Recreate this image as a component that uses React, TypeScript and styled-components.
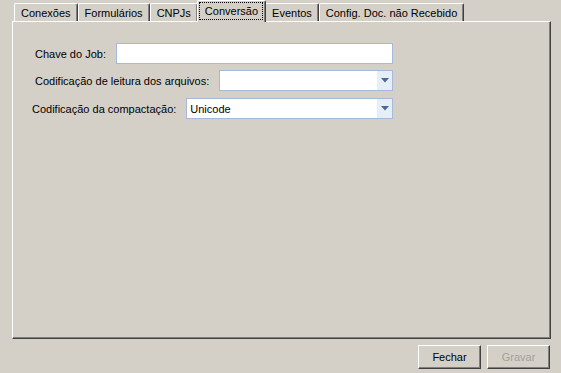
import React from 'react';
import styled, {createGlobalStyle} from 'styled-components';

const FACE = '#d4d0c8';
const SHADOW = '#808080';
const DARK = '#404040';
const FIELD_BORDER = '#a5b9da';

const GlobalStyle = createGlobalStyle`
	html, body {
		margin: 0;
		background: ${FACE};
	}
	body {
		font-family: "Liberation Sans", Arial, sans-serif;
		font-size: 11px;
		color: #000;
	}
`;

const Frame = styled.div`
	width: 561px;
	height: 373px;
	box-sizing: border-box;
	padding: 0 10px 0 12px;
	display: flex;
	flex-direction: column;
	background: ${FACE};
`;

const TabStrip = styled.div`
	display: flex;
	align-items: flex-end;
	height: 21px;
	padding-left: 2px;
	position: relative;
	z-index: 1;
`;

const Tab = styled.div<{$active?: boolean}>`
	position: relative;
	box-sizing: border-box;
	height: ${(p) => (p.$active ? '22px' : '18px')};
	margin: ${(p) => (p.$active ? '0 -1px -1px -1px' : '0')};
	padding: ${(p) => (p.$active ? '0 7px 2px' : '0 6px')};
	display: flex;
	align-items: center;
	white-space: nowrap;
	background: ${FACE};
	border-top: 1px solid #fff;
	border-left: 1px solid #fff;
	border-right: 1px solid ${DARK};
	border-radius: 2px 2px 0 0;
	box-shadow: inset -1px 0 0 ${SHADOW};
	cursor: default;

	${(p) =>
		p.$active &&
		`
		z-index: 1;
		&::after {
			content: '';
			position: absolute;
			left: 1px;
			right: 2px;
			top: 1px;
			bottom: 2px;
			border: 1px dotted #000;
		}
	`}
`;

const Panel = styled.div`
	height: 318px;
	box-sizing: border-box;
	border-top: 1px solid #fff;
	border-left: 1px solid #fff;
	border-right: 1px solid ${DARK};
	border-bottom: 1px solid ${DARK};
	box-shadow: inset -1px -1px 0 ${SHADOW};
	padding-top: 21px;
`;

const Form = styled.div`
	width: 380px;
	display: flex;
	flex-direction: column;
	gap: 6px;
`;

const Row = styled.div<{$indent: number; $top?: number}>`
	display: flex;
	align-items: center;
	gap: 10px;
	padding-left: ${(p) => p.$indent}px;
	margin-top: ${(p) => p.$top ?? 0}px;
`;

const Label = styled.label`
	white-space: nowrap;
	flex: none;
`;

const TextInput = styled.input`
	flex: 1;
	min-width: 0;
	height: 21px;
	box-sizing: border-box;
	border: 1px solid ${FIELD_BORDER};
	background: #fff;
	padding: 0 3px;
	font: inherit;
	outline: none;
`;

const Combo = styled.div`
	flex: 1;
	min-width: 0;
	height: 21px;
	box-sizing: border-box;
	border: 1px solid ${FIELD_BORDER};
	background: #fff;
	display: flex;
	align-items: stretch;
`;

const ComboText = styled.span`
	flex: 1;
	display: flex;
	align-items: center;
	padding-left: 3px;
`;

const ComboButton = styled.span`
	width: 15px;
	flex: none;
	background: #e6eef9;
	display: flex;
	align-items: center;
	justify-content: center;
`;

const Footer = styled.div`
	display: flex;
	justify-content: flex-end;
	gap: 6px;
	margin-top: 6px;
	padding-right: 1px;
`;

const Button = styled.button`
	width: 63px;
	height: 24px;
	box-sizing: border-box;
	background: ${FACE};
	border-top: 1px solid #fff;
	border-left: 1px solid #fff;
	border-right: 1px solid ${DARK};
	border-bottom: 1px solid ${DARK};
	box-shadow: inset -1px -1px 0 ${SHADOW};
	font: inherit;
	color: #000;
	padding: 0;

	&:disabled {
		color: #a3a09a;
	}
`;

const ArrowDown: React.FC = () => (
	<svg width="8" height="5" viewBox="0 0 8 5">
		<path d="M0 0h8L4 4.5z" fill="#4d6893" />
	</svg>
);

const ComboBox: React.FC<{value?: string}> = ({value}) => (
	<Combo>
		<ComboText>{value}</ComboText>
		<ComboButton>
			<ArrowDown />
		</ComboButton>
	</Combo>
);

const tabs = ['Conexões', 'Formulários', 'CNPJs', 'Conversão', 'Eventos', 'Config. Doc. não Recebido'];

export default function App() {
	return (
		<>
			<GlobalStyle />
			<Frame>
				<TabStrip>
					{tabs.map((t) => (
						<Tab key={t} $active={t === 'Conversão'}>
							{t}
						</Tab>
					))}
				</TabStrip>
				<Panel>
					<Form>
						<Row $indent={22}>
							<Label>Chave do Job:</Label>
							<TextInput />
						</Row>
						<Row $indent={22}>
							<Label>Codificação de leitura dos arquivos:</Label>
							<ComboBox />
						</Row>
						<Row $indent={19} $top={1}>
							<Label>Codificação da compactação:</Label>
							<ComboBox value="Unicode" />
						</Row>
					</Form>
				</Panel>
				<Footer>
					<Button>Fechar</Button>
					<Button disabled>Gravar</Button>
				</Footer>
			</Frame>
		</>
	);
}
